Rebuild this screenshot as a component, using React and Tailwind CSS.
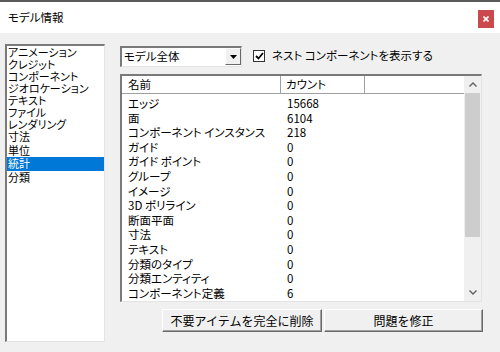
import React from "react";

const leftItems = ["アニメーション","クレジット","コンポーネント","ジオロケーション","テキスト","ファイル","レンダリング","寸法","単位","統計","分類"];
const kanji = ["寸法","単位","統計","分類"];
const rows = [
  ["エッジ","15668"],["面","6104"],["コンポーネント インスタンス","218"],["ガイド","0"],["ガイド ポイント","0"],["グループ","0"],["イメージ","0"],["3D ポリライン","0"],["断面平面","0"],["寸法","0"],["テキスト","0"],["分類のタイプ","0"],["分類エンティティ","0"],["コンポーネント定義","6"],
];

export default function App() {
  return (
    <div className="w-[500px] h-[352px] bg-[#f0f0f0] overflow-hidden text-[11.5px] text-black font-['Noto_Sans_CJK_JP','Noto_Sans',sans-serif] [font-feature-settings:'palt']">
      <div className="h-[33px] bg-white border-t-2 border-[#5a5a5a] flex items-center justify-between pl-[8px] pr-[6px]">
        <span className="text-[11.5px] leading-none">モデル情報</span>
        <div className="w-[16px] h-[18px] bg-[#c9494c] flex items-center justify-center mt-[2px]">
          <svg width="6" height="6" viewBox="0 0 6 6"><path d="M0.5 0.5L5.5 5.5M5.5 0.5L0.5 5.5" stroke="white" strokeWidth="1.6"/></svg>
        </div>
      </div>
      <div className="flex pl-[5px] pt-[11px]">
        <div className="w-[100px] h-[298px] bg-white border-l-2 border-t-2 border-[#7a7a7a] border-r border-b border-r-[#e3e3e3] border-b-[#e3e3e3] text-[11px]">
          {leftItems.map((t) => {
            const k = kanji.includes(t);
            const sel = t === "統計";
            return (
              <div key={t} className={`${k ? "h-[13.5px] leading-[13.5px]" : "h-[12px] leading-[12px]"} pl-[1px] whitespace-nowrap ${sel ? "bg-[#0078d7] text-white" : ""}`}>{t}</div>
            );
          })}
        </div>
        <div className="ml-[15px] w-[363px] pt-[1px]">
          <div className="flex items-center h-[22px]">
            <div className="w-[122px] h-[21px] bg-white border-l-2 border-t-2 border-[#7a7a7a] border-r border-b border-r-[#e3e3e3] border-b-[#e3e3e3] flex items-center justify-between">
              <span className="pl-[2px] leading-none">モデル全体</span>
              <div className="w-[16px] h-[17px] bg-[#f0f0f0] border-r border-b border-[#696969] border-l border-t border-l-white border-t-white flex items-center justify-center">
                <svg width="7" height="4" viewBox="0 0 7 4"><path d="M0 0H7L3.5 4Z" fill="black"/></svg>
              </div>
            </div>
            <div className="ml-[11px] w-[12px] h-[12px] bg-white border border-[#333] flex items-center justify-center">
              <svg width="9" height="8" viewBox="0 0 9 8"><path d="M1 4L3.5 6.5L8 1" stroke="black" strokeWidth="1.8" fill="none"/></svg>
            </div>
            <span className="ml-[7px] leading-none">ネスト コンポーネントを表示する</span>
          </div>
          <div className="mt-[7px] w-[362px] h-[228px] bg-white border-l-2 border-t-2 border-[#7a7a7a] border-r border-b border-r-[#e3e3e3] border-b-[#e3e3e3] flex">
            <div className="flex-1 flex flex-col">
              <div className="h-[18px] flex border-b border-[#a0a0a0] leading-[17px]">
                <div className="w-[159px] pl-[6px] border-r border-[#a0a0a0]">名前</div>
                <div className="w-[84px] pl-[5px] border-r border-[#a0a0a0]">カウント</div>
                <div className="flex-1"></div>
              </div>
              <div className="pt-[2px]">
                {rows.map(([n, c]) => (
                  <div key={n} className="h-[14.6px] leading-[14.6px] flex whitespace-nowrap">
                    <div className="w-[159px] pl-[6px]">{n}</div>
                    <div className="pl-[6px]">{c}</div>
                  </div>
                ))}
              </div>
            </div>
            <div className="w-[17px] bg-[#f0f0f0] flex flex-col">
              <div className="h-[17px] flex items-center justify-center">
                <svg width="8" height="5" viewBox="0 0 8 5"><path d="M0.5 4.5L4 1L7.5 4.5" stroke="#606060" strokeWidth="1.4" fill="none"/></svg>
              </div>
              <div className="mx-[1px] h-[144px] bg-[#cdcdcd]"></div>
              <div className="flex-1"></div>
              <div className="h-[17px] flex items-center justify-center">
                <svg width="8" height="5" viewBox="0 0 8 5"><path d="M0.5 0.5L4 4L7.5 0.5" stroke="#606060" strokeWidth="1.4" fill="none"/></svg>
              </div>
            </div>
          </div>
          <div className="flex mt-[7px] ml-[42px] text-[12px] [font-feature-settings:normal]">
            <div className="w-[160px] h-[23px] bg-[#f0f0f0] border border-l-white border-t-white border-r-[#696969] border-b-[#696969] shadow-[inset_-1px_-1px_0_#a0a0a0] flex items-center justify-center leading-none">不要アイテムを完全に削除</div>
            <div className="ml-[2px] w-[159px] h-[23px] bg-[#f0f0f0] border border-l-white border-t-white border-r-[#696969] border-b-[#696969] shadow-[inset_-1px_-1px_0_#a0a0a0] flex items-center justify-center leading-none">問題を修正</div>
          </div>
        </div>
      </div>
    </div>
  );
}
